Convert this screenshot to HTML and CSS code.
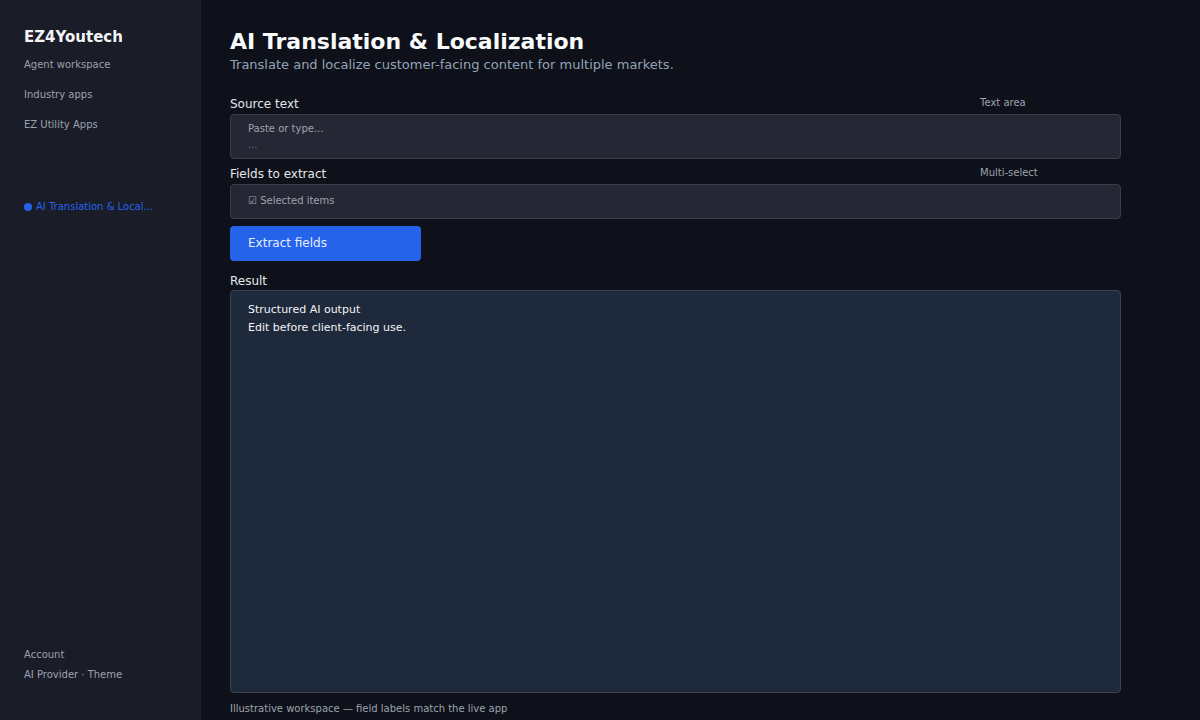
FILE: index.html
```html
<!DOCTYPE html>
<html lang="en">
<head>
<meta charset="utf-8">
<title>AI Translation &amp; Localization</title>
<link rel="stylesheet" href="styles.css">
</head>
<body>
<div class="app">
<aside class="sidebar">
<div class="brand">EZ4Youtech</div>
<nav class="nav">
<a class="nav-item">Agent workspace</a>
<a class="nav-item">Industry apps</a>
<a class="nav-item">EZ Utility Apps</a>
</nav>
<div class="nav-active"><span class="dot"></span>AI Translation &amp; Local...</div>
<div class="side-foot">
<div class="foot-item">Account</div>
<div class="foot-item">AI Provider · Theme</div>
</div>
</aside>
<main class="main">
<h1 class="title">AI Translation &amp; Localization</h1>
<p class="subtitle">Translate and localize customer-facing content for multiple markets.</p>

<div class="field-head">
<label class="label">Source text</label>
<span class="hint">Text area</span>
</div>
<div class="box box-text">
<div class="ph">Paste or type...</div>
<div class="ph dim">...</div>
</div>

<div class="field-head">
<label class="label">Fields to extract</label>
<span class="hint">Multi-select</span>
</div>
<div class="box box-select">
<div class="ph">☑ Selected items</div>
</div>

<button type="button" class="btn">Extract fields</button>

<div class="label result-label">Result</div>
<div class="result">
<div>Structured AI output</div>
<div>Edit before client-facing use.</div>
</div>
<div class="note">Illustrative workspace — field labels match the live app</div>
</main>
</div>
</body>
</html>
```
FILE: styles.css
```css
html, body {
    margin: 0;
    padding: 0;
    height: 100%;
    overflow: hidden;
}

body {
    background: #0e1119;
    color: #e5e7eb;
    font-family: "DejaVu Sans", sans-serif;
}

.app {
    display: flex;
    height: 720px;
}

.sidebar {
    width: 201px;
    flex: none;
    background: #1a1c27;
    box-sizing: border-box;
    padding: 28px 0 0 24px;
    display: flex;
    flex-direction: column;
}

.brand {
    font-size: 15px;
    font-weight: bold;
    color: #f3f4f6;
    height: 18px;
    line-height: 18px;
}

.nav {
    display: flex;
    flex-direction: column;
    margin-top: 12px;
}

.nav-item {
    font-size: 10px;
    color: #9ca3af;
    height: 30px;
    line-height: 14px;
}

.nav-active {
    margin-top: 52px;
    font-size: 10px;
    color: #2563eb;
    line-height: 14px;
    display: flex;
    align-items: center;
}

.dot {
    width: 8px;
    height: 8px;
    border-radius: 50%;
    background: #2563eb;
    margin-right: 4px;
}

.side-foot {
    margin-top: auto;
    padding-bottom: 32px;
}

.foot-item {
    font-size: 10px;
    color: #9ca3af;
    height: 20px;
    line-height: 14px;
}

.main {
    flex: 1;
    padding: 29px 0 0 29px;
}

.main > * {
    width: 891px;
    box-sizing: border-box;
}

.title {
    margin: 0;
    font-size: 22px;
    font-weight: bold;
    color: #f9fafb;
    line-height: 26px;
}

.subtitle {
    margin: 1px 0 0 0;
    font-size: 13px;
    color: #94a3b8;
    line-height: 18px;
}

.field-head {
    display: grid;
    grid-template-columns: 1fr 141px;
    align-items: end;
    margin-top: 7px;
    margin-bottom: 2px;
}

.subtitle + .field-head {
    margin-top: 22px;
}

.label {
    font-size: 12px;
    color: #e5e7eb;
    line-height: 16px;
    display: block;
}

.hint {
    font-size: 10px;
    color: #9ca3af;
    line-height: 16px;
    position: relative;
    top: -1px;
}

.box {
    background: #252834;
    border: 1px solid #3a3e4b;
    border-radius: 4px;
    padding: 0 17px;
}

.box-text {
    height: 45px;
    padding-top: 7px;
}

.box-select {
    height: 35px;
    padding-top: 9px;
}

.ph {
    font-size: 10px;
    color: #9ca3af;
    line-height: 14px;
}

.ph.dim {
    color: #6b7280;
    margin-top: 2px;
}

.btn {
    display: block;
    width: 191px !important;
    height: 35px;
    margin-top: 7px;
    background: #2563eb;
    border: none;
    border-radius: 4px;
    color: #e5edff;
    font-family: "DejaVu Sans", sans-serif;
    font-size: 12px;
    text-align: left;
    padding: 0 18px 1px 18px;
}

.result-label {
    margin-top: 12px;
}

.result {
    height: 403px;
    margin-top: 1px;
    background: #1e293b;
    border: 1px solid #3b4252;
    border-radius: 4px;
    padding: 10px 17px;
    font-size: 11px;
    line-height: 18px;
    color: #f3f4f6;
}

.note {
    margin-top: 9px;
    font-size: 10px;
    color: #9ca3af;
    line-height: 14px;
}
```
